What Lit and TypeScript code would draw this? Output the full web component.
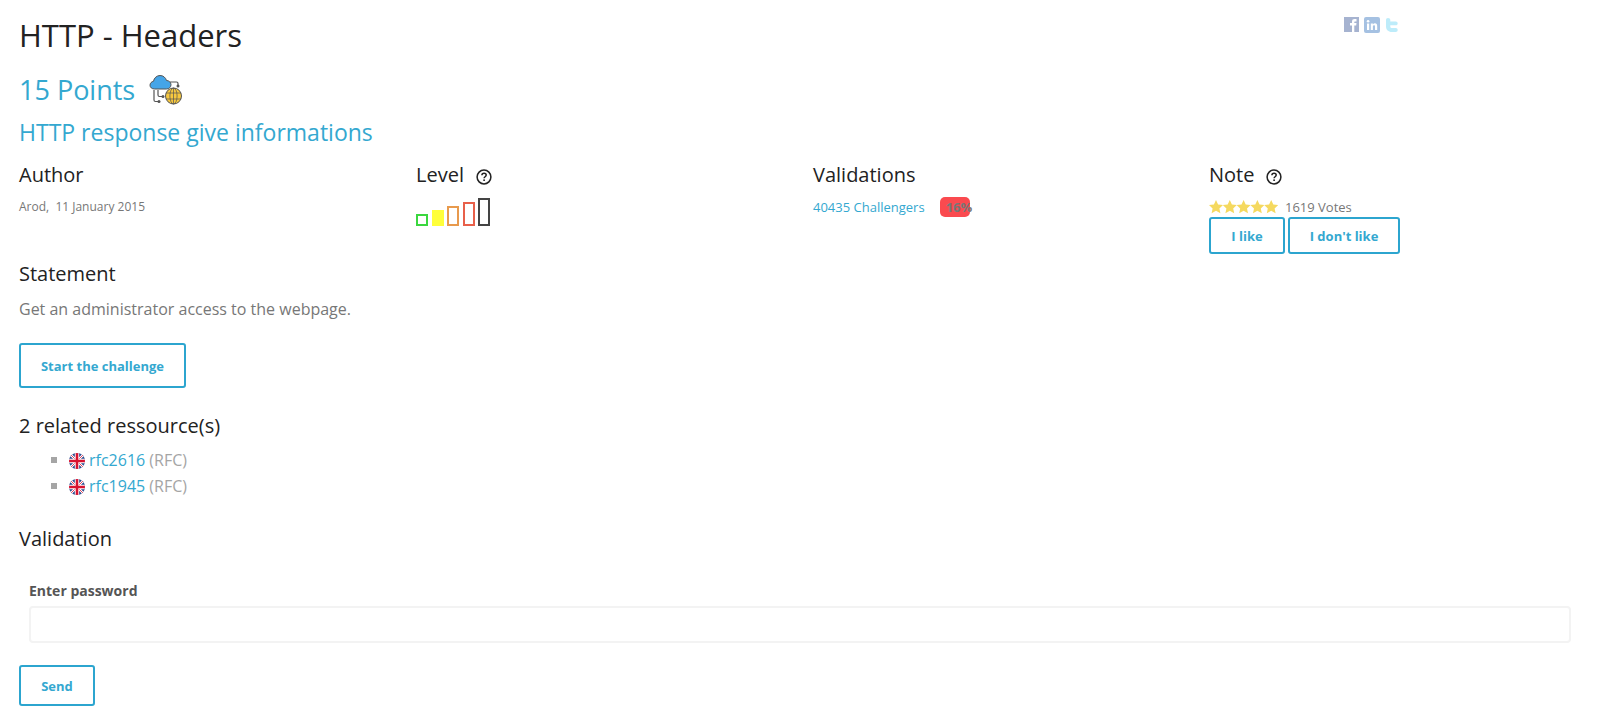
import {LitElement, css, html, svg} from 'lit'
import {customElement} from 'lit/decorators.js'

const help = html`<svg class="help" viewBox="0 0 16 16" width="16" height="16">
  <circle cx="8" cy="8" r="6.9" fill="none" stroke="#222" stroke-width="1.5"></circle>
  <path d="M5.9 6.3c0-1.3 1-2 2.2-2s2.1.7 2.1 1.8c0 1.7-2.1 1.6-2.1 3.2" fill="none" stroke="#222" stroke-width="1.5"></path>
  <rect x="7.3" y="10.4" width="1.6" height="1.6" fill="#222"></rect>
</svg>`

const flag = html`<svg class="flag" viewBox="0 0 16 16" width="16" height="16">
  <defs><clipPath id="c"><circle cx="8" cy="8" r="8"></circle></clipPath></defs>
  <g clip-path="url(#c)">
    <rect width="16" height="16" fill="#2a4a8f"></rect>
    <path d="M0 0L16 16M16 0L0 16" stroke="#fff" stroke-width="2.4"></path>
    <path d="M0 0L16 16M16 0L0 16" stroke="#d8112f" stroke-width="0.8"></path>
    <path d="M8 0V16M0 8H16" stroke="#fff" stroke-width="4.4"></path>
    <path d="M8 0V16M0 8H16" stroke="#d8112f" stroke-width="2.6"></path>
  </g>
</svg>`

const star = svg`<path d="M7 0l2.1 4.500 4.900.6-3.600 3.300 1 4.800L7 10.800l-4.400 2.400 1-4.800L0 5.100l4.900-.6z" fill="#f5d95f"></path>`

@customElement('app-root')
export class AppRoot extends LitElement {
  static styles = css`
    * {
      box-sizing: border-box;
    }

    :host {
      display: block;
      padding: 0 19px;
      font-family: 'Open Sans', sans-serif;
      font-size: 16px;
      color: #777;
      background: #fff;
      height: 728px;
      overflow: hidden;
    }

    a {
      color: #34a8d0;
      text-decoration: none;
    }

    .top {
      display: flex;
      justify-content: space-between;
      height: 67px;
    }

    h1 {
      margin: 15px 0 0;
      font-size: 31px;
      line-height: 40px;
      font-weight: 400;
      color: #222;
    }

    .social {
      display: flex;
      gap: 5px;
      margin: 17px 181px 0 0;
      opacity: 0.45;
      height: 16px;
    }

    .points {
      display: flex;
      align-items: center;
      gap: 14px;
      height: 44px;
      font-size: 27px;
      color: #34a8d0;
    }

    h2 {
      margin: 3px 0 0;
      font-size: 23px;
      line-height: 36px;
      font-weight: 400;
      color: #34a8d0;
    }

    .cols {
      display: grid;
      grid-template-columns: 397px 397px 396px 396px;
      margin-top: 11px;
      height: 95px;
    }

    h3 {
      margin: 0;
      font-size: 20px;
      line-height: 28px;
      font-weight: 400;
      color: #222;
      display: flex;
      align-items: center;
      gap: 12px;
    }

    .help {
      margin-top: 3px;
    }

    .small {
      font-size: 12px;
      line-height: 18px;
    }

    .author {
      margin-top: 9px;
    }

    .levels {
      display: flex;
      align-items: flex-end;
      gap: 3.5px;
      height: 30px;
      margin-top: 7px;
    }

    .lvl {
      width: 12px;
      border: 2px solid;
    }

    .valid {
      margin-top: 8px;
      display: flex;
      align-items: center;
      gap: 15px;
      font-size: 13px;
    }

    .badge {
      width: 30px;
      height: 20px;
      background: #fa4a4f;
      border-radius: 5px;
      font-weight: 700;
      font-size: 13px;
      line-height: 20px;
      white-space: nowrap;
      padding-left: 6px;
      color: #777;
    }

    .votes {
      display: flex;
      align-items: center;
      gap: 7px;
      margin-top: 9px;
      font-size: 13px;
      height: 18px;
    }

    .stars {
      display: block;
    }

    .btns {
      display: flex;
      gap: 3px;
      margin-top: 1px;
    }

    .btn {
      display: inline-flex;
      align-items: center;
      justify-content: center;
      border: 2px solid #2ca5cf;
      border-radius: 3px;
      background: #fff;
      color: #34a8d0;
      font-family: inherit;
      font-weight: 700;
      font-size: 13px;
      padding: 0;
    }

    .like {
      width: 76px;
      height: 37px;
    }

    .dislike {
      width: 112px;
      height: 37px;
    }

    .statement {
      margin-top: 4px;
    }

    p {
      margin: 8px 0 0;
      font-size: 16px;
      line-height: 26px;
    }

    .start {
      width: 167px;
      height: 45px;
      margin-top: 21px;
      display: flex;
    }

    .related {
      margin-top: 24px;
    }

    ul {
      list-style: none;
      margin: 7px 0 0;
      padding: 0 0 0 32px;
    }

    li {
      display: flex;
      align-items: center;
      height: 26px;
      gap: 4px;
      color: #a5a5a5;
    }

    li::before {
      content: '';
      width: 6px;
      height: 6px;
      background: #a5a5a5;
      margin-right: 8px;
    }

    .flag {
      flex: none;
      margin-top: 1px;
    }

    .validation {
      margin-top: 26px;
    }

    label {
      display: block;
      margin: 28px 0 0 10px;
      font-size: 14px;
      line-height: 20px;
      font-weight: 700;
      color: #555;
    }

    input {
      display: block;
      width: 1542px;
      height: 37px;
      margin: 5px 0 0 10px;
      border: 2px solid #f3f3f3;
      border-radius: 4px;
      background: #fff;
    }

    .send {
      width: 76px;
      height: 41px;
      margin-top: 22px;
      display: flex;
    }
  `

  render() {
    const levels = [
      {h: 12, c: '#3bd73f'},
      {h: 16, c: '#ffff3a', fill: true},
      {h: 20, c: '#e89a4d'},
      {h: 24, c: '#e8604a'},
      {h: 28, c: '#444'},
    ]
    return html`
      <div class="top">
        <h1>HTTP - Headers</h1>
        <div class="social">
          <svg viewBox="0 0 15 15" width="15" height="15">
            <rect width="15" height="15" fill="#3b5998"></rect>
            <path d="M8 15V8.500H6V6h2V4.500C8 2.800 9 2 10.500 2H12.500v2.400H11.300c-.8 0-1 .4-1 1V6h2.200l-.3 2.500h-1.900V15z" fill="#fff"></path>
          </svg>
          <svg viewBox="0 0 16 16" width="16" height="16">
            <rect width="16" height="16" rx="2" fill="#3a78c0"></rect>
            <rect x="3" y="6.500" width="2.200" height="6.500" fill="#fff"></rect>
            <circle cx="4.100" cy="4.200" r="1.300" fill="#fff"></circle>
            <path d="M6.800 6.500h2.100v1c.5-.8 1.200-1.200 2.100-1.200 1.500 0 2.200 1 2.200 2.700V13H11V9.500c0-.8-.3-1.300-1-1.300-.7 0-1.100.6-1.100 1.400V13H6.800z" fill="#fff"></path>
          </svg>
          <svg viewBox="0 0 15 16" width="15" height="16">
            <path d="M3 1c1.400 0 2.300.8 2.300 2v1.500h5.500c1.100 0 1.900.8 1.900 1.900S11.900 8.300 10.800 8.300H5.300V9.500c0 1 .7 1.600 1.700 1.600h3.800c1.100 0 1.900.8 1.900 1.900S11.900 15 10.800 15H6.700C3.500 15 1 12.700 1 9.500V3c0-1.200.8-2 2-2z" fill="#6fd7f5"></path>
          </svg>
        </div>
      </div>
      <div class="points">
        <span>15 Points</span>
        <svg viewBox="0 0 34 34" width="34" height="34">
          <g fill="none" stroke="#555" stroke-width="1.200">
            <path d="M5 18v10c0 1 .5 1.500 1.500 1.500H9"></path>
            <path d="M9 18v5c0 1 .5 1.500 1.500 1.500H14"></path>
            <path d="M21 10h6.500c1 0 1.500.5 1.500 1.500V14"></path>
          </g>
          <g fill="#555">
            <circle cx="10" cy="29.500" r="1.500"></circle>
            <circle cx="14" cy="24.500" r="1.500"></circle>
            <circle cx="29" cy="14" r="1.500"></circle>
          </g>
          <path d="M5.500 17C2.800 17 1 15.300 1 13.200c0-2 1.500-3.600 3.500-3.900C5 6 7.800 3.500 11 3.500c3.200 0 5.700 2.100 6.500 5 2.400 0 4.500 1.800 4.500 4.200 0 2.400-2 4.300-4.500 4.300z" fill="#45a5e8" stroke="#555" stroke-width="1"></path>
          <circle cx="24.500" cy="24" r="8" fill="#f7c83f" stroke="#555" stroke-width="1"></circle>
          <g fill="none" stroke="#555" stroke-width="0.700">
            <ellipse cx="24.500" cy="24" rx="3.600" ry="8"></ellipse>
            <path d="M24.500 16v16M17 21h15M17 27h15"></path>
          </g>
        </svg>
      </div>
      <h2>HTTP response give informations</h2>
      <div class="cols">
        <div>
          <h3>Author</h3>
          <div class="small author">Arod,&nbsp; 11 January 2015</div>
        </div>
        <div>
          <h3>Level ${help}</h3>
          <div class="levels">
            ${levels.map(
              (l) => html`<span
                class="lvl"
                style="height:${l.h}px;border-color:${l.c};${l.fill ? `background:${l.c}` : ''}"
              ></span>`,
            )}
          </div>
        </div>
        <div>
          <h3>Validations</h3>
          <div class="valid">
            <a href="#">40435 Challengers</a>
            <span class="badge">16%</span>
          </div>
        </div>
        <div>
          <h3>Note ${help}</h3>
          <div class="votes">
            <svg class="stars" viewBox="0 0 69 14" width="69" height="14">
              ${[0, 13.8, 27.6, 41.4, 55.2].map((x) => svg`<g transform="translate(${x} 0)">${star}</g>`)}
            </svg>
            <span>1619 Votes</span>
          </div>
          <div class="btns">
            <button class="btn like">I like</button>
            <button class="btn dislike">I don't like</button>
          </div>
        </div>
      </div>
      <h3 class="statement">Statement</h3>
      <p>Get an administrator access to the webpage.</p>
      <a class="btn start" href="#">Start the challenge</a>
      <h3 class="related">2 related ressource(s)</h3>
      <ul>
        <li>${flag}<span><a href="#">rfc2616</a> (RFC)</span></li>
        <li>${flag}<span><a href="#">rfc1945</a> (RFC)</span></li>
      </ul>
      <h3 class="validation">Validation</h3>
      <label>Enter password</label>
      <input type="password" />
      <button class="btn send">Send</button>
    `
  }
}
